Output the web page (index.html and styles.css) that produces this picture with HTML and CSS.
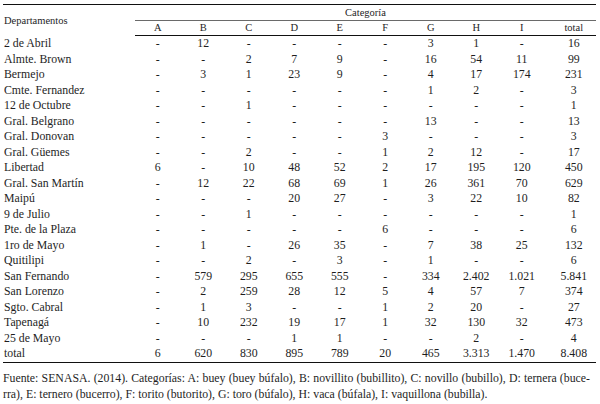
FILE: index.html
```html
<!DOCTYPE html>
<html lang="es">
<head>
<meta charset="utf-8">
<title>Categoría por departamento</title>
<link rel="stylesheet" href="styles.css">
</head>
<body>
<table class="data">
  <colgroup>
    <col class="c-dep">
    <col class="c-n"><col class="c-n"><col class="c-n"><col class="c-n"><col class="c-n">
    <col class="c-n"><col class="c-n"><col class="c-n"><col class="c-n">
    <col class="c-tot">
  </colgroup>
  <thead>
    <tr class="h1">
      <th class="dep" rowspan="2">Departamentos</th>
      <th class="cat" colspan="10">Categoría</th>
    </tr>
    <tr class="h2">
      <th>A</th><th>B</th><th>C</th><th>D</th><th>E</th><th>F</th><th>G</th><th>H</th><th>I</th><th class="tot">total</th>
    </tr>
  </thead>
  <tbody>
    <tr><td>2 de Abril</td><td>-</td><td>12</td><td>-</td><td>-</td><td>-</td><td>-</td><td>3</td><td>1</td><td>-</td><td class="tot">16</td></tr>
    <tr><td>Almte. Brown</td><td>-</td><td>-</td><td>2</td><td>7</td><td>9</td><td>-</td><td>16</td><td>54</td><td>11</td><td class="tot">99</td></tr>
    <tr><td>Bermejo</td><td>-</td><td>3</td><td>1</td><td>23</td><td>9</td><td>-</td><td>4</td><td>17</td><td>174</td><td class="tot">231</td></tr>
    <tr><td>Cmte. Fernandez</td><td>-</td><td>-</td><td>-</td><td>-</td><td>-</td><td>-</td><td>1</td><td>2</td><td>-</td><td class="tot">3</td></tr>
    <tr><td>12 de Octubre</td><td>-</td><td>-</td><td>1</td><td>-</td><td>-</td><td>-</td><td>-</td><td>-</td><td>-</td><td class="tot">1</td></tr>
    <tr><td>Gral. Belgrano</td><td>-</td><td>-</td><td>-</td><td>-</td><td>-</td><td>-</td><td>13</td><td>-</td><td>-</td><td class="tot">13</td></tr>
    <tr><td>Gral. Donovan</td><td>-</td><td>-</td><td>-</td><td>-</td><td>-</td><td>3</td><td>-</td><td>-</td><td>-</td><td class="tot">3</td></tr>
    <tr><td>Gral. Güemes</td><td>-</td><td>-</td><td>2</td><td>-</td><td>-</td><td>1</td><td>2</td><td>12</td><td>-</td><td class="tot">17</td></tr>
    <tr><td>Libertad</td><td>6</td><td>-</td><td>10</td><td>48</td><td>52</td><td>2</td><td>17</td><td>195</td><td>120</td><td class="tot">450</td></tr>
    <tr><td>Gral. San Martín</td><td>-</td><td>12</td><td>22</td><td>68</td><td>69</td><td>1</td><td>26</td><td>361</td><td>70</td><td class="tot">629</td></tr>
    <tr><td>Maipú</td><td>-</td><td>-</td><td>-</td><td>20</td><td>27</td><td>-</td><td>3</td><td>22</td><td>10</td><td class="tot">82</td></tr>
    <tr><td>9 de Julio</td><td>-</td><td>-</td><td>1</td><td>-</td><td>-</td><td>-</td><td>-</td><td>-</td><td>-</td><td class="tot">1</td></tr>
    <tr><td>Pte. de la Plaza</td><td>-</td><td>-</td><td>-</td><td>-</td><td>-</td><td>6</td><td>-</td><td>-</td><td>-</td><td class="tot">6</td></tr>
    <tr><td>1ro de Mayo</td><td>-</td><td>1</td><td>-</td><td>26</td><td>35</td><td>-</td><td>7</td><td>38</td><td>25</td><td class="tot">132</td></tr>
    <tr><td>Quitilipi</td><td>-</td><td>-</td><td>2</td><td>-</td><td>3</td><td>-</td><td>1</td><td>-</td><td>-</td><td class="tot">6</td></tr>
    <tr><td>San Fernando</td><td>-</td><td>579</td><td>295</td><td>655</td><td>555</td><td>-</td><td>334</td><td>2.402</td><td>1.021</td><td class="tot">5.841</td></tr>
    <tr><td>San Lorenzo</td><td>-</td><td>2</td><td>259</td><td>28</td><td>12</td><td>5</td><td>4</td><td>57</td><td>7</td><td class="tot">374</td></tr>
    <tr><td>Sgto. Cabral</td><td>-</td><td>1</td><td>3</td><td>-</td><td>-</td><td>1</td><td>2</td><td>20</td><td>-</td><td class="tot">27</td></tr>
    <tr><td>Tapenagá</td><td>-</td><td>10</td><td>232</td><td>19</td><td>17</td><td>1</td><td>32</td><td>130</td><td>32</td><td class="tot">473</td></tr>
    <tr><td>25 de Mayo</td><td>-</td><td>-</td><td>-</td><td>1</td><td>1</td><td>-</td><td>-</td><td>2</td><td>-</td><td class="tot">4</td></tr>
    <tr class="sum"><td>total</td><td>6</td><td>620</td><td>830</td><td>895</td><td>789</td><td>20</td><td>465</td><td>3.313</td><td>1.470</td><td class="tot">8.408</td></tr>
  </tbody>
</table>
<p class="note">Fuente: SENASA. (2014). Categorías: A: buey (buey búfalo), B: novillito (bubillito), C: novillo (bubillo), D: ternera (buce&shy;rra), E: ternero (bucerro), F: torito (butorito), G: toro (búfalo), H: vaca (búfala), I: vaquillona (bubilla).</p>
</body>
</html>
```

FILE: styles.css
```css
html, body {
  margin: 0;
  padding: 0;
  background: #fff;
}
body {
  padding-top: 4px;
  font-family: "Liberation Serif", "Times New Roman", serif;
  color: #1e1e1e;
}
.data {
  margin-left: 3px;
  width: 593px;
  table-layout: fixed;
  border-collapse: separate;
  border-spacing: 0;
  border-top: 1px solid #111;
  font-size: 11.8px;
}
.c-dep { width: 132px; }
.c-n { width: 45.5px; }
.c-tot { width: 51.5px; }

.data th {
  font-weight: normal;
  font-size: 10.5px;
  padding: 0;
}
.data th.dep {
  text-align: left;
  padding-left: 1px;
  vertical-align: middle;
}
.h1 th.cat {
  height: 15px;
  line-height: 15px;
  text-align: center;
  border-bottom: 1px solid #6a6a6a;
}
.h2 th {
  height: 14px;
  line-height: 14px;
  text-align: center;
  border-bottom: 1px solid #111;
}
.data td {
  padding: 0;
  height: 15.5px;
  line-height: 15.5px;
  text-align: center;
  white-space: nowrap;
}
.data td:first-child {
  text-align: left;
  padding-left: 1px;
}
.data .tot {
  padding-left: 7px;
}
.sum td {
  border-bottom: 1px solid #111;
}
.note {
  margin: 7px 10px 0 3px;
  font-size: 11.8px;
  line-height: 16px;
  text-align: justify;
  hyphens: manual;
}
```
